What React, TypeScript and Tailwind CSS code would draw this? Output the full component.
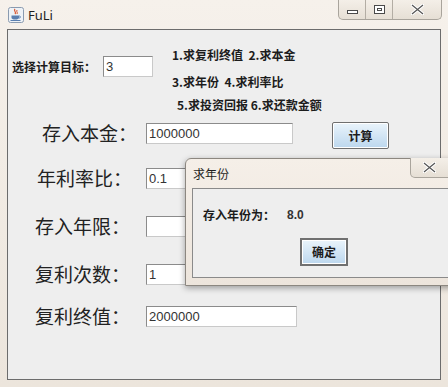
import React from 'react';

const cjk = "font-['Noto_Sans_CJK_SC',sans-serif]";

// Swing-style text field
const Field: React.FC<{ value?: string; w: string }> = ({ value, w }) => (
  <div
    className={`${w} h-[21px] shrink-0 bg-white border border-[#8b8b8b] border-r-[#c9c9c9] border-b-[#c9c9c9] pl-[2px] flex items-center text-[13px] font-normal text-[#333] font-['Liberation_Sans',sans-serif]`}
  >
    {value}
  </div>
);

const BigRow: React.FC<{ label: string; pl: string; value?: string; mt: string; w: string; children?: React.ReactNode }> = ({
  label,
  pl,
  value,
  mt,
  w,
  children,
}) => (
  <div className={`flex items-start ${mt}`}>
    <div className={`w-[138px] h-[21px] ${pl} flex items-center text-[19px] text-[#222] ${cjk} whitespace-nowrap`}>
      {label}
    </div>
    <Field value={value} w={w} />
    {children}
  </div>
);

const JavaIcon = () => (
  <svg width="16" height="16" viewBox="0 0 16 16">
    <rect x="0.5" y="0.5" width="15" height="15" rx="2" fill="#eef2f6" stroke="#8a9bb0" />
    <path d="M7 2 C5 4 9 5 7 7" stroke="#d9532c" strokeWidth="1.2" fill="none" />
    <path d="M9 3 C8 5 10 5 9 7" stroke="#d9532c" strokeWidth="1" fill="none" />
    <path d="M3.5 8.5 H11 V10.5 C11 12 9.5 12.5 7.2 12.5 C5 12.5 3.5 12 3.5 10.5 Z" fill="#5a7fb0" />
    <path d="M11 9 C13 9 13 11 11 11" stroke="#5a7fb0" fill="none" />
    <path d="M2.5 13.5 H12.5" stroke="#5a7fb0" />
  </svg>
);

const CloseGlyph = () => (
  <svg width="13" height="11" viewBox="0 0 13 11">
    <path d="M1 1 L12 10 M12 1 L1 10" stroke="#ffffff" strokeWidth="3.2" strokeLinecap="round" />
    <path d="M1 1 L12 10 M12 1 L1 10" stroke="#555" strokeWidth="1.2" />
  </svg>
);

export default function App() {
  return (
    <div className={`w-[448px] h-[387px] relative overflow-hidden bg-gradient-to-b from-[#f6f1eb] to-[#ece5dc] ${cjk}`}>
      {/* title bar */}
      <div className="h-[29px] flex items-start pl-[8px] pt-[7px] relative">
        <JavaIcon />
        <span className="ml-[4px] -mt-[1px] text-[13px] text-[#1e1e1e] font-['Noto_Sans',sans-serif]">FuLi</span>
        <div className="absolute left-[338px] top-0 w-[104px] h-[20px] flex border border-t-0 border-[#a9a49c] rounded-b-[5px] bg-gradient-to-b from-[#f4efe8] to-[#e6dfd5]">
          <div className="w-[27px] border-r border-[#b3ada4] flex items-center justify-center">
            <div className="w-[11px] h-[4px] mt-[5px] border border-[#4a4a4a] bg-white" />
          </div>
          <div className="w-[27px] border-r border-[#b3ada4] flex items-center justify-center">
            <div className="w-[11px] h-[9px] border border-[#4a4a4a] bg-white flex items-center justify-center">
              <div className="w-[5px] h-[3px] border border-[#4a4a4a]" />
            </div>
          </div>
          <div className="flex-1 flex items-center justify-center">
            <CloseGlyph />
          </div>
        </div>
      </div>

      {/* content pane */}
      <div className="mx-[7px] h-[351px] border border-[#6c6c6c] bg-[#eeeeee]">
        <div className="flex items-start pt-[17px] text-[12px] font-bold text-[#1c1c1c]">
          <div className="ml-[4px] mt-[9px] flex items-center">
            <span className="w-[91px] whitespace-nowrap">选择计算目标：</span>
            <Field value="3" w="w-[50px]" />
          </div>
          <div className="ml-[19px] flex flex-col leading-[16px] whitespace-nowrap">
            <span>1.求复利终值&nbsp; 2.求本金</span>
            <span className="mt-[11px]">3.求年份&nbsp; 4.求利率比</span>
            <span className="mt-[7px] ml-[5px]">5.求投资回报 6.求还款金额</span>
          </div>
        </div>

        <BigRow label="存入本金：" pl="pl-[34px]" value="1000000" mt="mt-[10px]" w="w-[147px]">
          <button className="ml-[39px] w-[57px] h-[27px] border border-[#6f6f6f] rounded-[2px] bg-gradient-to-b from-[#eaf4fb] to-[#bcd7ee] shadow-[inset_0_0_0_1px_#ffffff] text-[12px] font-bold text-[#1c1c1c] -mt-[1px]">
            计算
          </button>
        </BigRow>
        <BigRow label="年利率比：" pl="pl-[29px]" value="0.1" mt="mt-[19px]" w="w-[147px]" />
        <BigRow label="存入年限：" pl="pl-[27px]" mt="mt-[27px]" w="w-[147px]" />
        <BigRow label="复利次数：" pl="pl-[27px]" value="1" mt="mt-[27px]" w="w-[147px]" />
        <BigRow label="复利终值：" pl="pl-[27px]" value="2000000" mt="mt-[21px]" w="w-[151px]" />
      </div>

      {/* dialog */}
      <div className="absolute left-[185px] top-[158px] w-[280px] h-[128px] rounded-t-[6px] border border-[#8c8780] bg-gradient-to-b from-[#f5efe8] to-[#ede5dc] shadow-[0_2px_6px_rgba(0,0,0,0.35)]">
        <div className="h-[29px] pl-[7px] flex items-center text-[12px] text-[#1e1e1e]">求年份</div>
        <div className="absolute left-[224px] -top-px w-[60px] h-[20px] border border-t-0 border-[#a9a49c] rounded-bl-[5px] bg-gradient-to-b from-[#f4efe8] to-[#e6dfd5] flex items-center pl-[12px]">
          <CloseGlyph />
        </div>
        <div className="ml-[6px] h-[90px] border border-[#8a8a8a] bg-[#eeeeee] flex flex-col">
          <div className="mt-[17px] ml-[10px] flex items-center text-[12px] font-bold text-[#1c1c1c]">
            <span className="w-[84px]">存入年份为：</span>
            <span className="text-[#333] font-['Liberation_Sans',sans-serif]">8.0</span>
          </div>
          <button className="mt-[14px] ml-[107px] w-[48px] h-[28px] border-2 border-[#707070] bg-gradient-to-b from-[#eaf4fb] to-[#bcd7ee] shadow-[inset_0_0_0_1px_#ffffff] text-[12px] font-bold text-[#1c1c1c]">
            确定
          </button>
        </div>
      </div>
    </div>
  );
}
